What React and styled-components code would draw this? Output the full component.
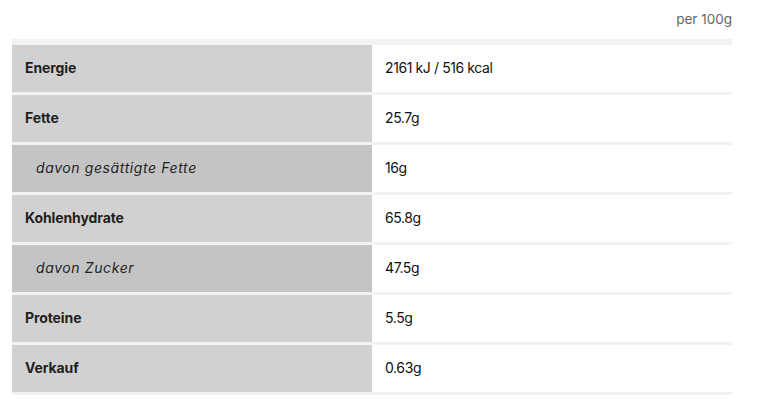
import styled, { createGlobalStyle } from "styled-components";

const GlobalStyle = createGlobalStyle`
  body {
    margin: 0;
    background: #fff;
    font-family: "Inter", "Liberation Sans", sans-serif;
    color: #222;
  }
`;

const Page = styled.div`
  width: 720px;
  padding: 10px 12px 0;
`;

const Unit = styled.div`
  text-align: right;
  font-size: 13.5px;
  color: #666;
  height: 29px;
  line-height: 18px;
`;

const Table = styled.div`
  background: #f2f2f2;
  padding: 6px 0 3px;
  display: grid;
  row-gap: 3px;
`;

const Row = styled.div`
  display: grid;
  grid-template-columns: 360px 360px;
  height: 47px;
`;

const Label = styled.div`
  display: flex;
  align-items: center;
  padding-bottom: 2px;
  background: ${(p) => (p.$sub ? "#c4c4c4" : "#d1d1d1")};
  padding-left: ${(p) => (p.$sub ? "24px" : "13px")};
  font-size: 14px;
  font-weight: ${(p) => (p.$sub ? 400 : 700)};
  font-style: ${(p) => (p.$sub ? "italic" : "normal")};
  letter-spacing: ${(p) => (p.$sub ? "0.6px" : "-0.1px")};
  color: #1f1f1f;
`;

const Value = styled.div`
  display: flex;
  align-items: center;
  padding-bottom: 2px;
  background: #fff;
  padding-left: 13px;
  font-size: 14px;
  letter-spacing: -0.4px;
  color: #111;
`;

const rows = [
  ["Energie", "2161 kJ / 516 kcal"],
  ["Fette", "25.7g"],
  ["davon gesättigte Fette", "16g", true],
  ["Kohlenhydrate", "65.8g"],
  ["davon Zucker", "47.5g", true],
  ["Proteine", "5.5g"],
  ["Verkauf", "0.63g"],
];

export default function App() {
  return (
    <>
      <GlobalStyle />
      <Page>
        <Unit>per 100g</Unit>
        <Table>
          {rows.map(([label, value, sub]) => (
            <Row key={label}>
              <Label $sub={sub}>{label}</Label>
              <Value>{value}</Value>
            </Row>
          ))}
        </Table>
      </Page>
    </>
  );
}
